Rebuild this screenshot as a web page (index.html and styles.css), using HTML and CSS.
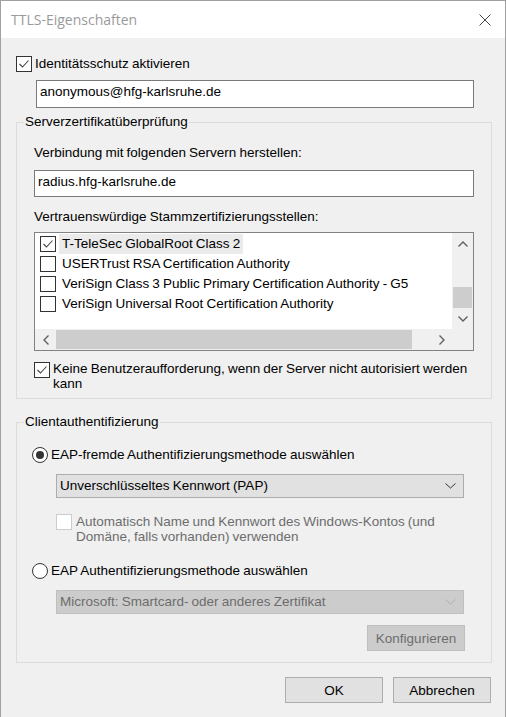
FILE: index.html
```html
<!DOCTYPE html>
<html lang="de">
<head>
<meta charset="utf-8">
<title>TTLS-Eigenschaften</title>
<link rel="stylesheet" href="styles.css">
</head>
<body>
<div class="window">
  <div class="titlebar">
    <span class="title">TTLS-Eigenschaften</span>
    <svg class="close" width="12" height="12" viewBox="0 0 12 12"><path d="M0.5 0.5 L11.5 11.5 M11.5 0.5 L0.5 11.5" stroke="#444" stroke-width="1" fill="none"/></svg>
  </div>
  <div class="content">
    <div class="check-row row-identity">
      <span class="cb"><svg width="14" height="14" viewBox="0 0 14 14"><path d="M2.5 7 L5.5 10 L11.5 3.5" stroke="#444" stroke-width="1.1" fill="none"/></svg></span>
      <span class="lbl">Identitätsschutz aktivieren</span>
    </div>
    <div class="textbox tb-identity">anonymous@hfg-karlsruhe.de</div>

    <div class="grp grp-server">
      <div class="grp-title">Serverzertifikatüberprüfung</div>
      <div class="label lbl-connect">Verbindung mit folgenden Servern herstellen:</div>
      <div class="textbox tb-server">radius.hfg-karlsruhe.de</div>
      <div class="label lbl-trusted">Vertrauenswürdige Stammzertifizierungsstellen:</div>
      <div class="listbox">
        <div class="items">
          <div class="item">
            <span class="cb"><svg width="14" height="14" viewBox="0 0 14 14"><path d="M2.5 7 L5.5 10 L11.5 3.5" stroke="#444" stroke-width="1.1" fill="none"/></svg></span>
            <span class="item-text selected">T-TeleSec GlobalRoot Class 2</span>
          </div>
          <div class="item">
            <span class="cb"></span>
            <span class="item-text">USERTrust RSA Certification Authority</span>
          </div>
          <div class="item">
            <span class="cb"></span>
            <span class="item-text">VeriSign Class 3 Public Primary Certification Authority - G5</span>
          </div>
          <div class="item">
            <span class="cb"></span>
            <span class="item-text">VeriSign Universal Root Certification Authority</span>
          </div>
        </div>
        <div class="vscroll">
          <div class="sb-btn"><svg width="10" height="6" viewBox="0 0 10 6"><path d="M0.5 5.5 L5 1 L9.5 5.5" stroke="#606060" stroke-width="1.4" fill="none"/></svg></div>
          <div class="vtrack"><div class="vthumb"></div></div>
          <div class="sb-btn"><svg width="10" height="6" viewBox="0 0 10 6"><path d="M0.5 0.5 L5 5 L9.5 0.5" stroke="#606060" stroke-width="1.4" fill="none"/></svg></div>
        </div>
        <div class="hscroll">
          <div class="sb-btn"><svg width="6" height="10" viewBox="0 0 6 10"><path d="M5.5 0.5 L1 5 L5.5 9.5" stroke="#606060" stroke-width="1.4" fill="none"/></svg></div>
          <div class="htrack"><div class="hthumb"></div></div>
          <div class="sb-btn"><svg width="6" height="10" viewBox="0 0 6 10"><path d="M0.5 0.5 L5 5 L0.5 9.5" stroke="#606060" stroke-width="1.4" fill="none"/></svg></div>
        </div>
        <div class="corner"></div>
      </div>
      <div class="check-row wrap row-noprompt">
        <span class="cb"><svg width="14" height="14" viewBox="0 0 14 14"><path d="M2.5 7 L5.5 10 L11.5 3.5" stroke="#444" stroke-width="1.1" fill="none"/></svg></span>
        <span class="lbl">Keine Benutzeraufforderung, wenn der Server nicht autorisiert werden<br>kann</span>
      </div>
    </div>

    <div class="grp grp-client">
      <div class="grp-title">Clientauthentifizierung</div>
      <div class="radio-row radio-first">
        <span class="radio"><span class="dot"></span></span>
        <span class="lbl">EAP-fremde Authentifizierungsmethode auswählen</span>
      </div>
      <div class="combo">
        <span class="combo-text">Unverschlüsseltes Kennwort (PAP)</span>
        <svg width="11" height="6" viewBox="0 0 11 6"><path d="M0.5 0.5 L5.5 5 L10.5 0.5" stroke="#333" stroke-width="1" fill="none"/></svg>
      </div>
      <div class="check-row wrap disabled-check">
        <span class="cb cb-disabled"></span>
        <span class="lbl">Automatisch Name und Kennwort des Windows-Kontos (und<br>Domäne, falls vorhanden) verwenden</span>
      </div>
      <div class="radio-row radio-second">
        <span class="radio"></span>
        <span class="lbl">EAP Authentifizierungsmethode auswählen</span>
      </div>
      <div class="combo combo-disabled">
        <span class="combo-text">Microsoft: Smartcard- oder anderes Zertifikat</span>
        <svg width="11" height="6" viewBox="0 0 11 6"><path d="M0.5 0.5 L5.5 5 L10.5 0.5" stroke="#b0b0b0" stroke-width="1" fill="none"/></svg>
      </div>
      <button class="btn btn-disabled btn-config">Konfigurieren</button>
    </div>

    <div class="footer">
      <button class="btn">OK</button>
      <button class="btn">Abbrechen</button>
    </div>
  </div>
</div>
</body>
</html>
```

FILE: styles.css
```css
html, body {
  margin: 0;
  padding: 0;
  background: #f0f0f0;
}

.window {
  width: 506px;
  height: 717px;
  box-sizing: border-box;
  border: 1px solid #a0a0a0;
  border-bottom: none;
  background: #f0f0f0;
  font-family: "Liberation Sans", Arial, sans-serif;
  font-size: 13.5px;
  word-spacing: -0.6px;
  color: #000;
  display: flex;
  flex-direction: column;
  overflow: hidden;
}

.titlebar {
  height: 37px;
  flex: none;
  background: #fff;
  display: flex;
  align-items: center;
  justify-content: space-between;
  padding: 0 14px 0 10px;
}

.title {
  font-family: "Open Sans", "Noto Sans", sans-serif;
  font-size: 14px;
  word-spacing: 0;
  color: #9a9a9a;
}

.close {
  display: block;
}

.content {
  flex: 1;
  padding: 0 13px 0 15px;
}

/* checkboxes */
.check-row {
  display: flex;
  align-items: flex-start;
  gap: 3px;
  line-height: 16px;
  white-space: nowrap;
}

.cb {
  width: 16px;
  height: 16px;
  box-sizing: border-box;
  border: 1px solid #333;
  background: #fff;
  flex: none;
  display: flex;
  align-items: center;
  justify-content: center;
}

.cb svg {
  display: block;
}

.row-identity {
  margin-top: 18px;
}

/* text boxes */
.textbox {
  box-sizing: border-box;
  border: 1px solid #7a7a7a;
  background: #fff;
  padding: 0 3px;
  white-space: nowrap;
}

.tb-identity {
  margin: 8px 0 0 20px;
  width: 438px;
  height: 28px;
  line-height: 22px;
}

.tb-server {
  margin-top: 9px;
  width: 440px;
  height: 27px;
  line-height: 21px;
}

/* group boxes */
.grp {
  border: 1px solid #dcdcdc;
}

.grp-title {
  width: fit-content;
  line-height: 16px;
  padding: 0 1px;
  background: #f0f0f0;
  margin-top: -9px;
}

.grp-server {
  margin-top: 14px;
  padding: 0 17px 7px 17px;
}

.grp-server .grp-title {
  margin-left: -10px;
}

.label {
  line-height: 16px;
}

.lbl-connect {
  margin-top: 15px;
}

.lbl-trusted {
  margin-top: 12px;
}

/* list box */
.listbox {
  margin-top: 7px;
  width: 440px;
  height: 119px;
  box-sizing: border-box;
  border: 1px solid #828282;
  background: #fff;
  display: grid;
  grid-template-columns: 1fr 21px;
  grid-template-rows: 1fr 21px;
}

.items {
  padding-top: 1px;
  overflow: hidden;
  min-width: 0;
}

.item {
  height: 20px;
  display: flex;
  align-items: center;
  gap: 3px;
  padding-left: 5px;
  white-space: nowrap;
}

.item-text {
  padding: 0 3px;
  line-height: 20px;
}

.item-text.selected {
  background: #ebebeb;
}

.vscroll {
  background: #f0f0f0;
  display: flex;
  flex-direction: column;
}

.sb-btn {
  flex: none;
  width: 21px;
  height: 21px;
  display: flex;
  align-items: center;
  justify-content: center;
}

.vtrack {
  flex: 1;
  display: flex;
  flex-direction: column;
  justify-content: flex-end;
}

.vthumb {
  height: 21px;
  margin: 0 1px;
  background: #cdcdcd;
}

.hscroll {
  background: #f0f0f0;
  display: flex;
  min-width: 0;
}

.htrack {
  flex: 1;
  display: flex;
  align-items: center;
}

.hthumb {
  width: 356px;
  height: 19px;
  background: #cdcdcd;
}

.corner {
  background: #f0f0f0;
}

.row-noprompt {
  margin-top: 10px;
  line-height: 15px;
}

.row-noprompt .cb {
  margin-top: 1px;
}

/* client group */
.grp-client {
  margin-top: 23px;
  padding: 0 17px 11px 15px;
}

.grp-client .grp-title {
  margin-left: -8px;
}

.radio-row {
  display: flex;
  align-items: center;
  gap: 3px;
  line-height: 16px;
}

.radio {
  width: 16px;
  height: 16px;
  box-sizing: border-box;
  border: 1px solid #333;
  border-radius: 50%;
  background: #fff;
  flex: none;
  display: flex;
  align-items: center;
  justify-content: center;
}

.dot {
  width: 8px;
  height: 8px;
  border-radius: 50%;
  background: #333;
}

.radio-first {
  margin-top: 17px;
}

.radio-second {
  margin-top: 19px;
}

.combo {
  margin: 11px 0 0 24px;
  width: 408px;
  height: 24px;
  box-sizing: border-box;
  border: 1px solid #adadad;
  background: #e1e1e1;
  display: flex;
  align-items: center;
  justify-content: space-between;
  padding: 0 7px 2px 3px;
  white-space: nowrap;
}

.combo svg {
  margin-top: 2px;
}

.combo-disabled {
  background: #cccccc;
  border-color: #bfbfbf;
  color: #6d6d6d;
}

.disabled-check {
  margin: 16px 0 0 24px;
  gap: 4px;
  line-height: 15px;
  color: #6d6d6d;
}

.cb-disabled {
  border-color: #cccccc;
  background: #fff;
}

/* buttons */
.btn {
  width: 98px;
  height: 26px;
  box-sizing: border-box;
  border: 1px solid #adadad;
  background: #e1e1e1;
  font: inherit;
  word-spacing: inherit;
  color: #000;
  padding: 0;
  display: flex;
  align-items: center;
  justify-content: center;
}

.btn-disabled {
  background: #cccccc;
  border-color: #bfbfbf;
  color: #6d6d6d;
}

.btn-config {
  margin: 11px 0 0 335px;
}

.footer {
  display: flex;
  justify-content: flex-end;
  gap: 10px;
  margin-top: 14px;
  padding-right: 1px;
}
```
